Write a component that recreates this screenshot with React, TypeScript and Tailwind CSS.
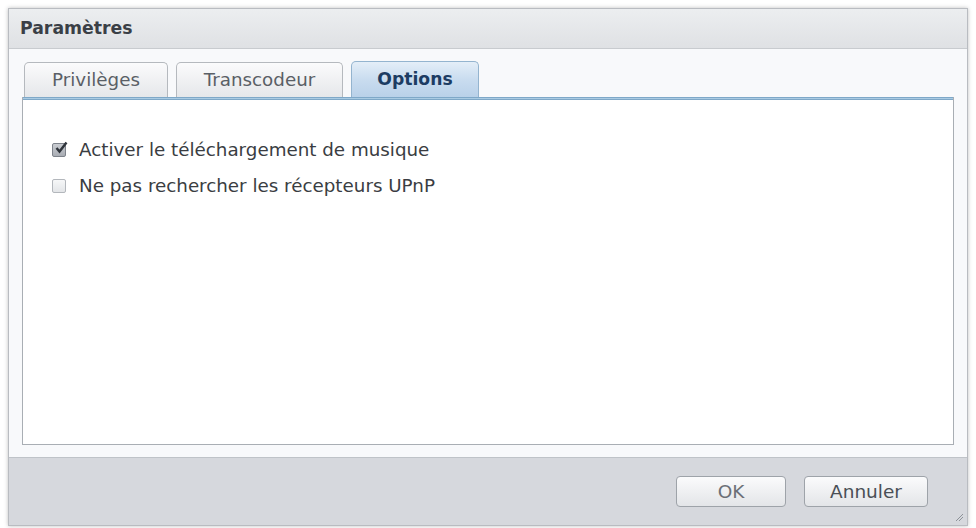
import React from "react";

const font = { fontFamily: '"DejaVu Sans", Verdana, sans-serif' };

function Tab({ label, active }: { label: string; active?: boolean }) {
  if (active) {
    return (
      <div className="flex h-[36px] w-[128px] items-center justify-center rounded-t-[5px] border border-b-0 border-[#94b4cf] bg-gradient-to-b from-[#e4eef8] via-[#c9dcef] to-[#b9d1e9] text-[17.2px] font-bold text-[#1c3c63]">
        {label}
      </div>
    );
  }
  return (
    <div className="flex h-[35px] items-center justify-center rounded-t-[5px] border border-b-0 border-[#b5b9be] bg-gradient-to-b from-[#fbfbfc] to-[#e5e7ea] text-[18.3px] text-[#5a5f66]">
      {label}
    </div>
  );
}

function Check({ checked, label }: { checked?: boolean; label: string }) {
  return (
    <div className="flex items-center gap-[13px] text-[18.3px] leading-[20px] text-[#3a3d42]">
      <span
        className={
          checked
            ? "relative flex h-[14px] w-[14px] items-center justify-center rounded-[2px] border border-[#7d828a] bg-gradient-to-b from-[#c9ccd1] to-[#a9adb4]"
            : "flex h-[14px] w-[14px] items-center justify-center rounded-[2px] border border-[#b3b7bc] bg-gradient-to-b from-[#f6f7f8] to-[#e3e5e8]"
        }
      >
        {checked && (
          <svg width="14" height="14" viewBox="0 0 14 14" className="absolute -top-[3px] left-[1px]">
            <path d="M2.5 7 L5.5 10.5 L12.5 1.5" fill="none" stroke="#2f343b" strokeWidth="2.4" />
          </svg>
        )}
      </span>
      <span>{label}</span>
    </div>
  );
}

export default function App() {
  return (
    <div className="h-[528px] w-[976px] bg-white p-[8px] pb-[2px]" style={font}>
      <div className="flex h-full flex-col border border-[#b9bcc1] bg-[#f8f9fb] shadow-[0_0_4px_rgba(0,0,0,0.25)]">
        <div className="flex h-[40px] items-center border-b border-[#c8cbcf] bg-gradient-to-b from-[#eceef0] to-[#dfe1e4] px-[11px] text-[17.3px] font-bold text-[#3a3f46]">
          Paramètres
        </div>
        <div className="flex flex-1 flex-col px-[13px] pt-[12px] pb-[12px]">
          <div className="flex items-end gap-[8px] pl-[2px]">
            <div className="w-[144px]">
              <Tab label="Privilèges" />
            </div>
            <div className="w-[167px]">
              <Tab label="Transcodeur" />
            </div>
            <Tab label="Options" active />
          </div>
          <div className="flex flex-1 flex-col border border-t-0 border-[#a9aeb4] bg-white">
            <div className="h-[3px] border-y border-[#7fa8c8] bg-[#a9cbe3]" />
            <div className="flex flex-col gap-[16px] pl-[29px] pt-[40px]">
              <Check checked label="Activer le téléchargement de musique" />
              <Check label="Ne pas rechercher les récepteurs UPnP" />
            </div>
          </div>
        </div>
        <div className="relative flex h-[68px] items-center justify-end gap-[18px] border-t border-[#bfc3c8] bg-[#d6d8dd] pr-[39px]">
          <button className="h-[31px] w-[110px] rounded-[4px] border border-[#9ea3a9] bg-gradient-to-b from-[#fbfbfc] to-[#e3e5e8] text-[18.5px] text-[#6b7077]">
            OK
          </button>
          <button className="h-[31px] w-[124px] rounded-[4px] border border-[#9ea3a9] bg-gradient-to-b from-[#fbfbfc] to-[#e3e5e8] text-[18.5px] text-[#4a4f56]">
            Annuler
          </button>
          <svg width="10" height="10" viewBox="0 0 10 10" className="absolute bottom-[3px] right-[3px]">
            <path d="M9 2 L2 9 M9 5 L5 9" stroke="#8d9298" strokeWidth="1" />
          </svg>
        </div>
      </div>
    </div>
  );
}
